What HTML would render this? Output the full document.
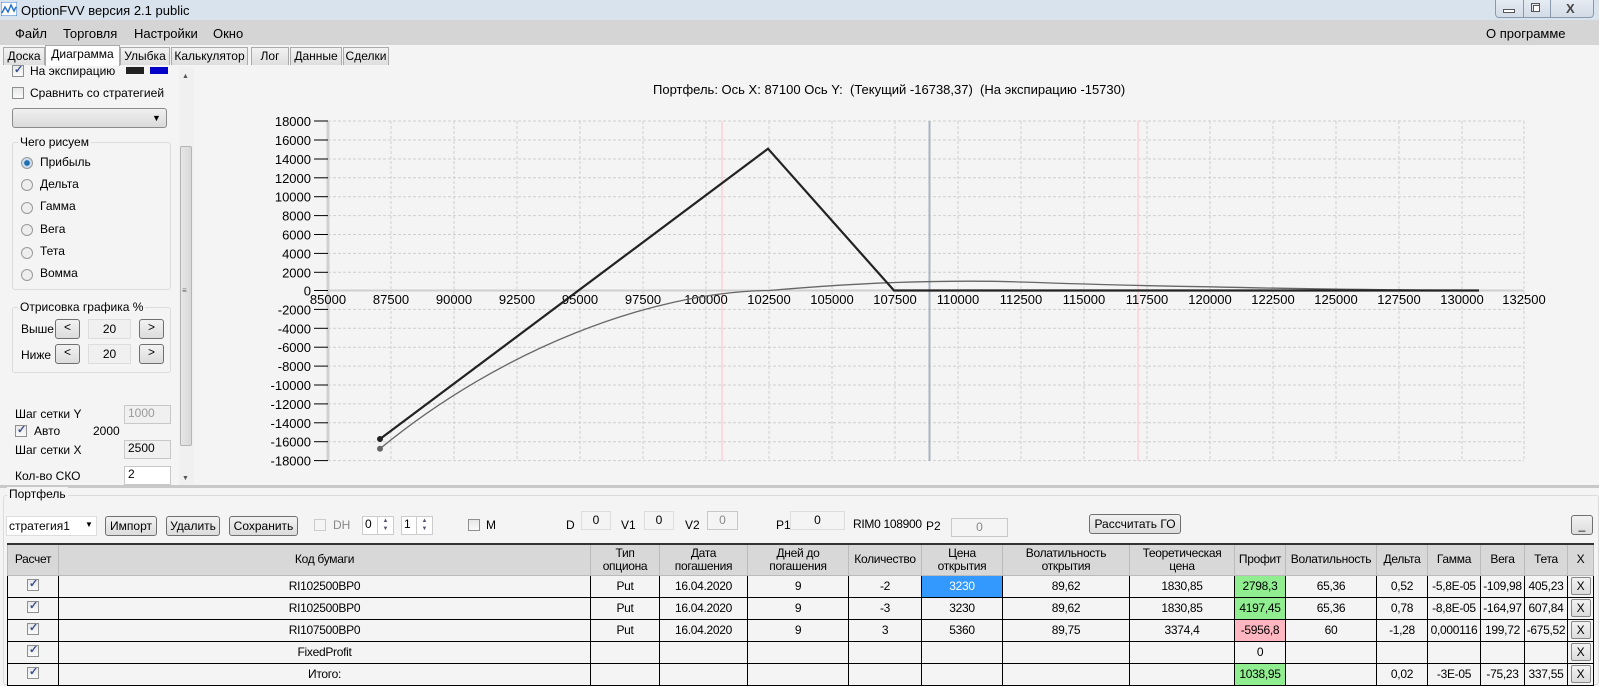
<!DOCTYPE html>
<html><head><meta charset="utf-8">
<style>
*{box-sizing:border-box;margin:0;padding:0}
body{width:1599px;height:685px;overflow:hidden;background:#f4f4f4;font-family:"Liberation Sans",sans-serif;font-size:12px;color:#000;position:relative}
.a{position:absolute;white-space:nowrap}
.btn{position:absolute;border:1px solid #707070;border-radius:3px;background:linear-gradient(#f2f2f2,#dcdcdc);text-align:center;font-size:12px}
.fld{position:absolute;border:1px solid #c8c8c8;background:#f0f0f0;text-align:center;font-size:12px}
.cb{position:absolute;width:12px;height:12px;border:1px solid #8e8f8f;background:linear-gradient(#e8e8e8,#fafafa)}
.cb.c::after{content:"✓";position:absolute;left:1px;top:-3px;font-size:11px;color:#3a4e8c;font-weight:bold}
.rd{position:absolute;width:12px;height:12px;border:1px solid #999;border-radius:50%;background:#eee}
.tab{position:absolute;top:47px;height:18px;border:1px solid #aaa;border-bottom:none;background:linear-gradient(#f2f2f2,#dedede);text-align:center;line-height:16px;font-size:12px}
table{position:absolute;left:7px;top:543px;border-collapse:collapse;font-size:12px;letter-spacing:-0.3px}
td{border:1px solid #000;height:22px;text-align:center;padding:0;background:#f4f4f4}
tr.h td{background:#d8d8d8;height:31px;line-height:13px;border-color:#bbb;border-top:2px solid #333}
.x{display:inline-block;width:20px;height:18px;border:1px solid #888;border-radius:2px;background:linear-gradient(#f2f2f2,#dcdcdc);line-height:16px}
</style></head><body>
<div class="a" style="left:0;top:0;width:1599px;height:20px;background:#d9e3ee"></div>
<svg class="a" style="left:1px;top:2px" width="16" height="14"><rect x="0" y="0" width="16" height="14" fill="#fff" stroke="#2a6fc9"/><polyline points="1,11 4,5 7,10 10,3 13,9 15,5" fill="none" stroke="#2a6fc9" stroke-width="1.5"/></svg>
<div class="a" style="left:21px;top:3px;font-size:13px">OptionFVV версия 2.1 public</div>
<div class="a" style="left:1495px;top:0;width:99px;height:18px;border:1px solid #8a9aae;border-top:none;border-radius:0 0 4px 4px;background:linear-gradient(#e6ecf3,#d2dbe6)"></div>
<div class="a" style="left:1523px;top:0;width:1px;height:18px;background:#8a9aae"></div>
<div class="a" style="left:1550px;top:0;width:1px;height:18px;background:#8a9aae"></div>
<div class="a" style="left:1503px;top:9px;width:12px;height:4px;border:1px solid #555;background:#fff"></div>
<div class="a" style="left:1531px;top:3px;width:9px;height:9px;border:1px solid #555"></div>
<div class="a" style="left:1533px;top:5px;width:7px;height:7px;border:1px solid #555;background:#fff"></div>
<div class="a" style="left:1566px;top:1px;font-size:13px;color:#444;font-weight:bold">X</div>
<div class="a" style="left:0;top:20px;width:1599px;height:25px;background:#d5d5d5"></div>
<div class="a" style="left:15px;top:26px;font-size:13px">Файл</div>
<div class="a" style="left:63px;top:26px;font-size:13px">Торговля</div>
<div class="a" style="left:134px;top:26px;font-size:13px">Настройки</div>
<div class="a" style="left:213px;top:26px;font-size:13px">Окно</div>
<div class="a" style="left:1486px;top:26px;font-size:13px">О программе</div>
<div class="a" style="left:0;top:45px;width:1599px;height:21px;background:#f4f4f4"></div>
<div class="tab" style="left:3px;width:42px">Доска</div>
<div class="tab" style="left:120px;width:50px">Улыбка</div>
<div class="tab" style="left:171px;width:77px">Калькулятор</div>
<div class="tab" style="left:251px;width:38px">Лог</div>
<div class="tab" style="left:290px;width:52px">Данные</div>
<div class="tab" style="left:343px;width:46px">Сделки</div>
<div class="tab" style="left:45px;top:45px;height:21px;width:75px;background:#fff;z-index:2">Диаграмма</div>
<div class="cb c" style="left:12px;top:65px"></div>
<div class="a" style="left:30px;top:64px">На экспирацию</div>
<div class="a" style="left:126px;top:67px;width:18px;height:7px;background:#222"></div>
<div class="a" style="left:150px;top:67px;width:18px;height:7px;background:#0000c8"></div>
<div class="cb" style="left:12px;top:87px"></div>
<div class="a" style="left:30px;top:86px">Сравнить со стратегией</div>
<div class="a" style="left:12px;top:108px;width:155px;height:20px;border:1px solid #8a8a8a;border-radius:3px;background:linear-gradient(#f0f0f0,#dadada)"></div>
<div class="a" style="left:152px;top:113px;font-size:9px">▼</div>
<div class="a" style="left:12px;top:142px;width:159px;height:148px;border:1px solid #dcdcdc;border-radius:3px"></div>
<div class="a" style="left:18px;top:135px;background:#f4f4f4;padding:0 2px">Чего рисуем</div>
<div class="rd" style="left:21px;top:157px;background:radial-gradient(#1e6fb0 35%,#cde 45%)"></div><div class="a" style="left:40px;top:155px">Прибыль</div>
<div class="rd" style="left:21px;top:179px"></div><div class="a" style="left:40px;top:177px">Дельта</div>
<div class="rd" style="left:21px;top:202px"></div><div class="a" style="left:40px;top:199px">Гамма</div>
<div class="rd" style="left:21px;top:224px"></div><div class="a" style="left:40px;top:222px">Вега</div>
<div class="rd" style="left:21px;top:247px"></div><div class="a" style="left:40px;top:244px">Тета</div>
<div class="rd" style="left:21px;top:269px"></div><div class="a" style="left:40px;top:266px">Вомма</div>
<div class="a" style="left:12px;top:307px;width:159px;height:66px;border:1px solid #dcdcdc;border-radius:3px"></div>
<div class="a" style="left:18px;top:300px;background:#f4f4f4;padding:0 2px">Отрисовка графика %</div>
<div class="a" style="left:21px;top:322px">Выше</div>
<div class="btn" style="left:55px;top:319px;width:25px;height:20px">&lt;</div>
<div class="fld" style="left:88px;top:319px;width:43px;height:20px;line-height:18px;border-color:#ddd">20</div>
<div class="btn" style="left:139px;top:319px;width:25px;height:20px">&gt;</div>
<div class="a" style="left:21px;top:348px">Ниже</div>
<div class="btn" style="left:55px;top:344px;width:25px;height:20px">&lt;</div>
<div class="fld" style="left:88px;top:344px;width:43px;height:20px;line-height:18px;border-color:#ddd">20</div>
<div class="btn" style="left:139px;top:344px;width:25px;height:20px">&gt;</div>
<div class="a" style="left:15px;top:407px">Шаг сетки Y</div>
<div class="fld" style="left:124px;top:405px;width:47px;height:19px;text-align:left;padding-left:3px;color:#999">1000</div>
<div class="cb c" style="left:15px;top:425px"></div>
<div class="a" style="left:34px;top:424px">Авто</div>
<div class="a" style="left:93px;top:424px">2000</div>
<div class="a" style="left:15px;top:443px">Шаг сетки X</div>
<div class="fld" style="left:124px;top:440px;width:47px;height:19px;text-align:left;padding-left:3px">2500</div>
<div class="a" style="left:15px;top:469px">Кол-во СКО</div>
<div class="fld" style="left:124px;top:466px;width:47px;height:19px;text-align:left;padding-left:3px;background:#fff">2</div>
<div class="a" style="left:179px;top:67px;width:15px;height:418px;background:#f0f0f0"></div>
<div class="a" style="left:180px;top:146px;width:12px;height:300px;border:1px solid #b5b5b5;border-radius:2px;background:linear-gradient(90deg,#e6e6e6,#d8d8d8)"></div>
<div class="a" style="left:182px;top:73px;font-size:7px;color:#555">▲</div>
<div class="a" style="left:182px;top:475px;font-size:7px;color:#555">▼</div>
<div class="a" style="left:182px;top:286px;font-size:8px;color:#666">≡</div>
<div class="a" style="left:0;top:485px;width:1599px;height:3px;background:#c8c8c8"></div>
<div class="a" style="left:653px;top:82px;font-size:13px">Портфель: Ось X: 87100 Ось Y:&nbsp; (Текущий -16738,37)&nbsp; (На экспирацию -15730)</div>
<svg class="a" style="left:0;top:0" width="1599" height="485" font-family="Liberation Sans" font-size="13">
<g stroke="#cfcfcf" stroke-dasharray="3,2" stroke-width="1">
<line x1="328" y1="121" x2="1524" y2="121"/><line x1="328" y1="140" x2="1524" y2="140"/><line x1="328" y1="159" x2="1524" y2="159"/><line x1="328" y1="177.8" x2="1524" y2="177.8"/><line x1="328" y1="196.7" x2="1524" y2="196.7"/><line x1="328" y1="215.6" x2="1524" y2="215.6"/><line x1="328" y1="234.5" x2="1524" y2="234.5"/><line x1="328" y1="253.4" x2="1524" y2="253.4"/><line x1="328" y1="272.3" x2="1524" y2="272.3"/><line x1="328" y1="309.4" x2="1524" y2="309.4"/><line x1="328" y1="328.3" x2="1524" y2="328.3"/><line x1="328" y1="347.2" x2="1524" y2="347.2"/><line x1="328" y1="366.1" x2="1524" y2="366.1"/><line x1="328" y1="385" x2="1524" y2="385"/><line x1="328" y1="403.9" x2="1524" y2="403.9"/><line x1="328" y1="422.8" x2="1524" y2="422.8"/><line x1="328" y1="441.7" x2="1524" y2="441.7"/><line x1="328" y1="460.6" x2="1524" y2="460.6"/>
<line x1="391" y1="121" x2="391" y2="461"/><line x1="454" y1="121" x2="454" y2="461"/><line x1="517" y1="121" x2="517" y2="461"/><line x1="580" y1="121" x2="580" y2="461"/><line x1="643" y1="121" x2="643" y2="461"/><line x1="706" y1="121" x2="706" y2="461"/><line x1="769" y1="121" x2="769" y2="461"/><line x1="832" y1="121" x2="832" y2="461"/><line x1="895" y1="121" x2="895" y2="461"/><line x1="958" y1="121" x2="958" y2="461"/><line x1="1021" y1="121" x2="1021" y2="461"/><line x1="1084" y1="121" x2="1084" y2="461"/><line x1="1147" y1="121" x2="1147" y2="461"/><line x1="1210" y1="121" x2="1210" y2="461"/><line x1="1273" y1="121" x2="1273" y2="461"/><line x1="1336" y1="121" x2="1336" y2="461"/><line x1="1399" y1="121" x2="1399" y2="461"/><line x1="1462" y1="121" x2="1462" y2="461"/><line x1="1524" y1="121" x2="1524" y2="461"/>
</g>
<line x1="722" y1="121" x2="722" y2="461" stroke="#ffd0d8" stroke-width="1.5"/>
<line x1="1138" y1="121" x2="1138" y2="461" stroke="#ffd0d8" stroke-width="1.5"/>
<line x1="929.5" y1="121" x2="929.5" y2="461" stroke="#a8b4c0" stroke-width="2"/>
<line x1="328" y1="121" x2="328" y2="461" stroke="#d0d0d0" stroke-width="3"/>
<line x1="328" y1="290.5" x2="1524" y2="290.5" stroke="#d0d0d0" stroke-width="2"/>
<g stroke="#000" stroke-width="1">
<line x1="314" y1="121" x2="328" y2="121"/><line x1="314" y1="140" x2="328" y2="140"/><line x1="314" y1="159" x2="328" y2="159"/><line x1="314" y1="177.8" x2="328" y2="177.8"/><line x1="314" y1="196.7" x2="328" y2="196.7"/><line x1="314" y1="215.6" x2="328" y2="215.6"/><line x1="314" y1="234.5" x2="328" y2="234.5"/><line x1="314" y1="253.4" x2="328" y2="253.4"/><line x1="314" y1="272.3" x2="328" y2="272.3"/><line x1="314" y1="290.5" x2="328" y2="290.5"/><line x1="314" y1="309.4" x2="328" y2="309.4"/><line x1="314" y1="328.3" x2="328" y2="328.3"/><line x1="314" y1="347.2" x2="328" y2="347.2"/><line x1="314" y1="366.1" x2="328" y2="366.1"/><line x1="314" y1="385" x2="328" y2="385"/><line x1="314" y1="403.9" x2="328" y2="403.9"/><line x1="314" y1="422.8" x2="328" y2="422.8"/><line x1="314" y1="441.7" x2="328" y2="441.7"/><line x1="314" y1="460.6" x2="328" y2="460.6"/>
</g>
<g text-anchor="end">
<text x="311" y="126">18000</text><text x="311" y="145">16000</text><text x="311" y="164">14000</text><text x="311" y="182.8">12000</text><text x="311" y="201.7">10000</text><text x="311" y="220.6">8000</text><text x="311" y="239.5">6000</text><text x="311" y="258.4">4000</text><text x="311" y="277.3">2000</text><text x="311" y="295.5">0</text><text x="311" y="314.4">-2000</text><text x="311" y="333.3">-4000</text><text x="311" y="352.2">-6000</text><text x="311" y="371.1">-8000</text><text x="311" y="390">-10000</text><text x="311" y="408.9">-12000</text><text x="311" y="427.8">-14000</text><text x="311" y="446.7">-16000</text><text x="311" y="465.6">-18000</text>
</g>
<g text-anchor="middle">
<text x="328" y="304">85000</text><text x="391" y="304">87500</text><text x="454" y="304">90000</text><text x="517" y="304">92500</text><text x="580" y="304">95000</text><text x="643" y="304">97500</text><text x="706" y="304">100000</text><text x="769" y="304">102500</text><text x="832" y="304">105000</text><text x="895" y="304">107500</text><text x="958" y="304">110000</text><text x="1021" y="304">112500</text><text x="1084" y="304">115000</text><text x="1147" y="304">117500</text><text x="1210" y="304">120000</text><text x="1273" y="304">122500</text><text x="1336" y="304">125000</text><text x="1399" y="304">127500</text><text x="1462" y="304">130000</text><text x="1524" y="304">132500</text>
</g>
<path d="M380,448.7 C500,350 650,292 769,290.5 C810,287 850,284 895,282.5 C940,281 990,281 1021,282 C1080,284 1150,286 1210,286.8 C1300,289 1400,290 1479,290.5" fill="none" stroke="#666" stroke-width="1.3"/>
<polyline points="380,439 768,148.7 894,290.5 1479,290.5" fill="none" stroke="#222" stroke-width="2.2"/>
<circle cx="380" cy="439" r="3" fill="#222"/>
<circle cx="380" cy="448.7" r="3" fill="#666"/>
</svg>
<div class="a" style="left:3px;top:495px;width:1596px;height:190px;border:1px solid #dcdcdc;border-radius:3px"></div>
<div class="a" style="left:7px;top:487px;background:#f4f4f4;padding:0 2px">Портфель</div>
<div class="a" style="left:6px;top:516px;width:91px;height:20px;background:#fff;border:1px solid #ddd;padding:2px 2px">стратегия1</div>
<div class="a" style="left:85px;top:520px;font-size:8px">▼</div>
<div class="btn" style="left:105px;top:516px;width:52px;height:20px;line-height:18px">Импорт</div>
<div class="btn" style="left:166px;top:516px;width:54px;height:20px;line-height:18px">Удалить</div>
<div class="btn" style="left:229px;top:516px;width:69px;height:20px;line-height:18px">Сохранить</div>
<div class="cb" style="left:314px;top:519px;border-color:#ccc;background:#f4f4f4"></div>
<div class="a" style="left:333px;top:518px;color:#888">DH</div>
<div class="a" style="left:362px;top:516px;width:32px;height:19px;border:1px solid #ccc;background:#fff;padding-left:2px">0</div>
<div class="a" style="left:377px;top:517px;width:16px;height:17px;border-left:1px solid #ccc;font-size:6px;color:#557;line-height:8px;text-align:center">▲<br>▼</div>
<div class="a" style="left:401px;top:516px;width:32px;height:19px;border:1px solid #ccc;background:#fff;padding-left:2px">1</div>
<div class="a" style="left:416px;top:517px;width:16px;height:17px;border-left:1px solid #ccc;font-size:6px;color:#557;line-height:8px;text-align:center">▲<br>▼</div>
<div class="cb" style="left:468px;top:519px"></div>
<div class="a" style="left:486px;top:518px">M</div>
<div class="a" style="left:566px;top:518px">D</div>
<div class="fld" style="left:581px;top:511px;width:30px;height:19px;background:#f4f4f4;border-color:#ddd;line-height:17px">0</div>
<div class="a" style="left:621px;top:518px">V1</div>
<div class="fld" style="left:644px;top:511px;width:30px;height:19px;background:#f4f4f4;border-color:#ddd;line-height:17px">0</div>
<div class="a" style="left:685px;top:518px">V2</div>
<div class="fld" style="left:707px;top:511px;width:31px;height:19px;line-height:17px;color:#888;background:#f4f4f4">0</div>
<div class="a" style="left:776px;top:518px">P1</div>
<div class="fld" style="left:790px;top:511px;width:55px;height:19px;line-height:17px;background:#f4f4f4;border-color:#ddd">0</div>
<div class="a" style="left:853px;top:517px;letter-spacing:-0.3px">RIM0 108900</div>
<div class="a" style="left:926px;top:519px">P2</div>
<div class="fld" style="left:951px;top:518px;width:57px;height:19px;line-height:17px;color:#888;background:#f4f4f4">0</div>
<div class="btn" style="left:1089px;top:514px;width:92px;height:20px;line-height:18px">Рассчитать ГО</div>
<div class="btn" style="left:1571px;top:515px;width:22px;height:20px;line-height:18px">_</div>
<table>
<tr class="h"><td style="width:51px">Расчет</td><td style="width:532px">Код бумаги</td><td style="width:69px">Тип<br>опциона</td><td style="width:88px">Дата<br>погашения</td><td style="width:101px">Дней до<br>погашения</td><td style="width:73px">Количество</td><td style="width:81px">Цена<br>открытия</td><td style="width:127px">Волатильность<br>открытия</td><td style="width:105px">Теоретическая<br>цена</td><td style="width:51px">Профит</td><td style="width:91px">Волатильность</td><td style="width:51px">Дельта</td><td style="width:53px">Гамма</td><td style="width:44px">Вега</td><td style="width:43px">Тета</td><td style="width:26px">X</td></tr>
<tr><td><span class="cb c" style="position:relative;display:inline-block"></span></td><td>RI102500BP0</td><td>Put</td><td>16.04.2020</td><td>9</td><td>-2</td><td style="background:#3399ff;color:#fff">3230</td><td>89,62</td><td>1830,85</td><td style="background:#90ee90">2798,3</td><td>65,36</td><td>0,52</td><td>-5,8E-05</td><td>-109,98</td><td>405,23</td><td><span class="x">X</span></td></tr>
<tr><td><span class="cb c" style="position:relative;display:inline-block"></span></td><td>RI102500BP0</td><td>Put</td><td>16.04.2020</td><td>9</td><td>-3</td><td>3230</td><td>89,62</td><td>1830,85</td><td style="background:#90ee90">4197,45</td><td>65,36</td><td>0,78</td><td>-8,8E-05</td><td>-164,97</td><td>607,84</td><td><span class="x">X</span></td></tr>
<tr><td><span class="cb c" style="position:relative;display:inline-block"></span></td><td>RI107500BP0</td><td>Put</td><td>16.04.2020</td><td>9</td><td>3</td><td>5360</td><td>89,75</td><td>3374,4</td><td style="background:#ffb6c1">-5956,8</td><td>60</td><td>-1,28</td><td>0,000116</td><td>199,72</td><td>-675,52</td><td><span class="x">X</span></td></tr>
<tr><td><span class="cb c" style="position:relative;display:inline-block"></span></td><td>FixedProfit</td><td></td><td></td><td></td><td></td><td></td><td></td><td></td><td>0</td><td></td><td></td><td></td><td></td><td></td><td><span class="x">X</span></td></tr>
<tr><td><span class="cb c" style="position:relative;display:inline-block"></span></td><td>Итого:</td><td></td><td></td><td></td><td></td><td></td><td></td><td></td><td style="background:#90ee90">1038,95</td><td></td><td>0,02</td><td>-3E-05</td><td>-75,23</td><td>337,55</td><td><span class="x">X</span></td></tr>
</table>
</body></html>
